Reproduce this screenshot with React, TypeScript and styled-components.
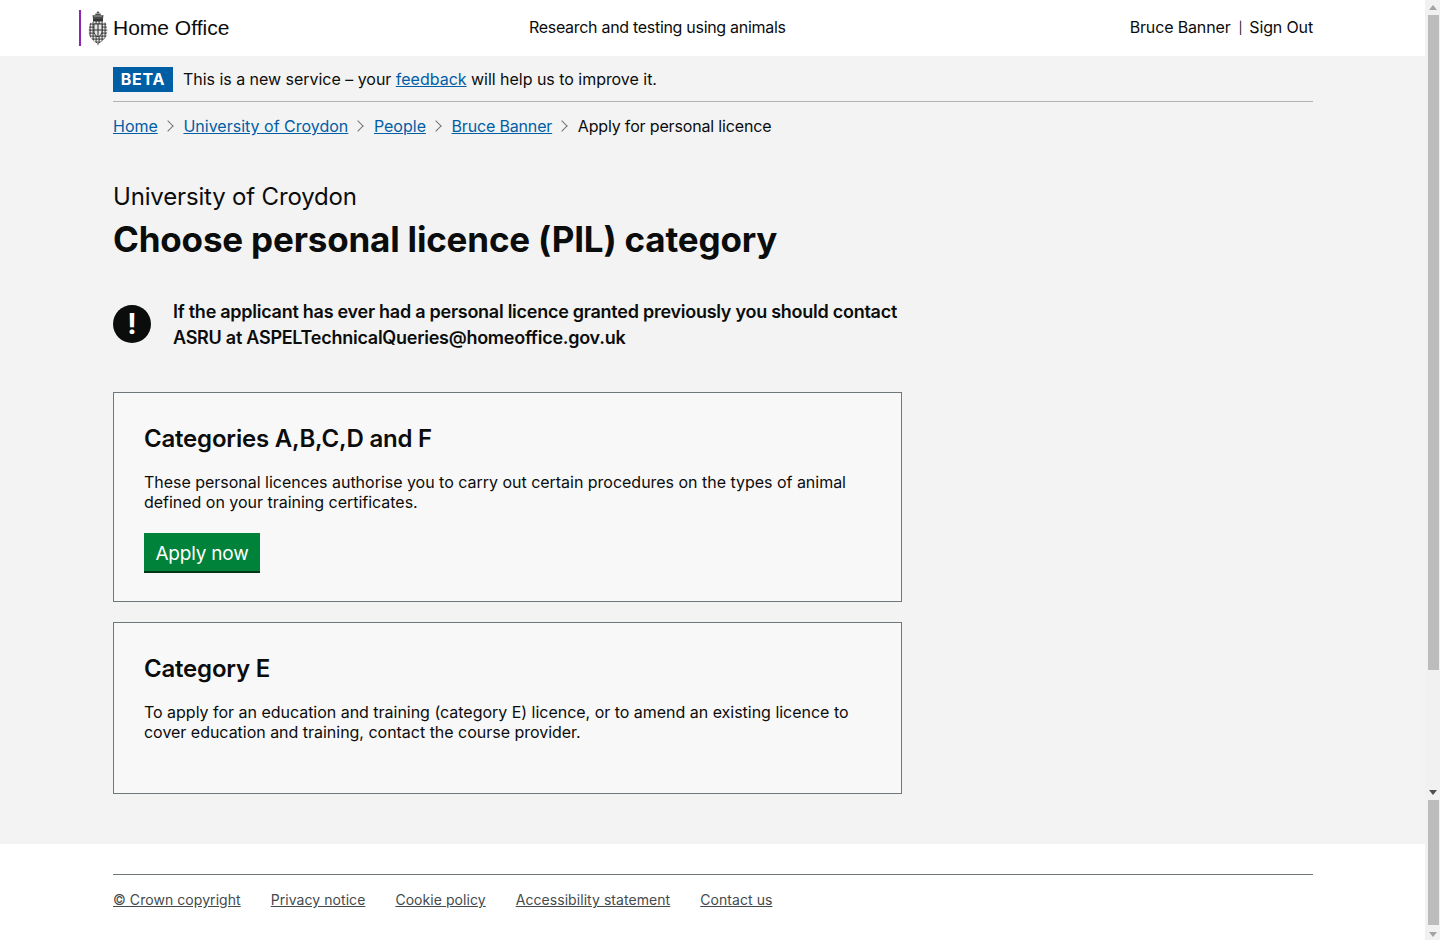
import React from "react"

import styled, { createGlobalStyle } from "styled-components"

const crumbs = [
  { label: "Home" },
  { label: "University of Croydon" },
  { label: "People" },
  { label: "Bruce Banner", tight: true },
]
const footerLinks = ["© Crown copyright", "Privacy notice", "Cookie policy", "Accessibility statement", "Contact us"]

const App = () => {
  return (
    <Viewport>
      <GlobalStyle />
      <Page>
        <Header>
          <Brand>
            <Crest />
            <BrandName>Home Office</BrandName>
          </Brand>
          <ServiceName>Research and testing using animals</ServiceName>
          <UserNav>
            <span>Bruce Banner</span>
            <NavDivider>|</NavDivider>
            <span>Sign Out</span>
          </UserNav>
        </Header>
        <Main>
          <Wrap>
            <PhaseBanner>
              <PhaseTag>BETA</PhaseTag>
              <span>
                This is a new service – your <Link href="#">feedback</Link> will help us to improve it.
              </span>
            </PhaseBanner>
            <Breadcrumbs>
              {crumbs.map(crumb => (
                <React.Fragment key={crumb.label}>
                  <Link href="#" $tight={crumb.tight}>
                    {crumb.label}
                  </Link>
                  <Chevron />
                </React.Fragment>
              ))}
              <CurrentCrumb>Apply for personal licence</CurrentCrumb>
            </Breadcrumbs>
            <Caption>University of Croydon</Caption>
            <Title>Choose personal licence (PIL) category</Title>
            <Warning>
              <WarningIcon>!</WarningIcon>
              <WarningText>
                If the applicant has ever had a personal licence granted previously you should contact ASRU at
                ASPELTechnicalQueries@homeoffice.gov.uk
              </WarningText>
            </Warning>
            <Panel>
              <PanelTitle>Categories A,B,C,D and F</PanelTitle>
              <PanelText>
                These personal licences authorise you to carry out certain procedures on the types of animal defined on
                your training certificates.
              </PanelText>
              <ApplyButton>Apply now</ApplyButton>
            </Panel>
            <Panel $short>
              <PanelTitle>Category E</PanelTitle>
              <PanelText>
                To apply for an education and training (category E) licence, or to amend an existing licence to cover
                education and training, contact the course provider.
              </PanelText>
            </Panel>
          </Wrap>
        </Main>
        <Footer>
          <FooterLinks>
            {footerLinks.map(link => (
              <FooterLink href="#" key={link}>
                {link}
              </FooterLink>
            ))}
          </FooterLinks>
        </Footer>
      </Page>
      <Scrollbar>
        <ArrowUp />
        <Thumb $height={655} />
        <ArrowDown $dark />
        <Thumb $height={125} />
        <ArrowDown />
      </Scrollbar>
    </Viewport>
  )
}

// royal crest, small enough that only crown + mottled shield read
const Crest = () => (
  <CrestSvg viewBox="0 0 20 36">
    <defs>
      <pattern id="mottle" width="3" height="3" patternUnits="userSpaceOnUse">
        <rect width="3" height="3" fill="#8a8a8a" />
        <rect x="0" y="0" width="1.2" height="1.2" fill="#eee" />
        <rect x="1.6" y="1.6" width="1.2" height="1.2" fill="#222" />
      </pattern>
    </defs>
    <path d="M5 9 L4.5 5 Q7 6 8 3.5 L10 1 L12 3.5 Q13 6 15.5 5 L15 9 Z" fill="#4a4a4a" />
    <path d="M6 6 H14 M7 3.5 H13" stroke="#bbb" strokeWidth="0.8" />
    <rect x="5" y="9" width="10" height="2.5" fill="#333" />
    <path d="M2 13 Q10 9 18 13 Q20 19 19 25 Q16 31 10 34 Q4 31 1 25 Q0 19 2 13 Z" fill="url(#mottle)" />
    <path d="M6 14 H14 V22 Q14 25 10 27 Q6 25 6 22 Z" fill="#e6e6e6" stroke="#333" strokeWidth="0.9" />
    <path d="M10 14 V27 M6 20 H14" stroke="#333" strokeWidth="1.1" />
    <path d="M9 33 H11 L10 36 Z" fill="#777" />
  </CrestSvg>
)

const GlobalStyle = createGlobalStyle`
  html, body {
    margin: 0;
    padding: 0;
    overflow: hidden;
  }

  body {
    background-color: #fff;
    color: #0b0c0c;
    font-family: Inter, "Liberation Sans", sans-serif;
    font-size: 16px;
  }

  * {
    box-sizing: border-box;
  }
`

const Viewport = styled.div`
  display: flex;
  width: 1440px;
  height: 940px;
  overflow: hidden;
`

const Page = styled.div`
  display: flex;
  flex-direction: column;
  width: 1425px;
  flex: none;
`

const Header = styled.header`
  display: grid;
  grid-template-columns: 450px 1fr auto;
  align-items: center;
  height: 56px;
  padding: 0 112px 0 79px;
  background-color: #fff;
`

const Brand = styled.div`
  display: flex;
  align-items: center;
  height: 36px;
  padding-left: 7px;
  border-left: 2px solid #8f23b3;
`

const CrestSvg = styled.svg`
  width: 20px;
  height: 36px;
  flex: none;
`

const BrandName = styled.span`
  margin-left: 5px;
  font-family: "Liberation Sans", Arial, sans-serif;
  font-size: 21px;
`

const ServiceName = styled.div`
  padding-bottom: 2px;
  font-size: 16px;
  letter-spacing: -0.3px;
`

const UserNav = styled.div`
  display: flex;
  align-items: center;
  justify-content: flex-end;
  padding-bottom: 2px;
  font-size: 16px;
  letter-spacing: -0.15px;
`

const NavDivider = styled.span`
  margin: 0 7px 0 8px;
  font-size: 12px;
`

const Main = styled.main`
  height: 788px;
  background-color: #f3f3f3;
`

const Wrap = styled.div`
  width: 1200px;
  margin-left: 113px;
`

const PhaseBanner = styled.div`
  display: flex;
  align-items: center;
  gap: 10px;
  height: 46px;
  padding-top: 1px;
  border-bottom: 1px solid #b1b4b6;
  letter-spacing: -0.03px;
  line-height: 24px;
`

const PhaseTag = styled.strong`
  display: block;
  width: 60px;
  height: 25px;
  background-color: #005ea5;
  color: #fff;
  font-weight: 700;
  line-height: 25px;
  text-align: center;
  letter-spacing: 0.8px;
`

const Link = styled.a<{ $tight?: boolean }>`
  color: #005ea5;
  letter-spacing: ${({ $tight }) => ($tight ? "-0.17px" : "0")};
  text-decoration: underline;
`

const Breadcrumbs = styled.nav`
  display: flex;
  align-items: center;
  height: 24px;
  margin-top: 12px;
`

const CurrentCrumb = styled.span`
  letter-spacing: -0.16px;
`

const Chevron = styled.span`
  width: 8px;
  height: 8px;
  margin: 0 11.6px 0 6px;
  border-top: 1px solid #6f777b;
  border-right: 1px solid #6f777b;
  transform: rotate(45deg);
`

const Caption = styled.div`
  margin-top: 44px;
  font-size: 24px;
  letter-spacing: -0.17px;
  line-height: 30px;
`

const Title = styled.h1`
  margin: 7px 0 0;
  font-size: 35px;
  font-weight: 700;
  letter-spacing: -0.18px;
  line-height: 40px;
`

const Warning = styled.div`
  display: flex;
  width: 800px;
  margin-top: 40px;
`

const WarningIcon = styled.div`
  width: 38px;
  height: 38px;
  margin-top: 6px;
  flex: none;
  border-radius: 50%;
  background-color: #0b0c0c;
  color: #fff;
  font-size: 28px;
  font-weight: 700;
  line-height: 38px;
  text-align: center;
`

const WarningText = styled.p`
  margin: 0 0 0 22px;
  font-size: 18px;
  font-weight: 600;
  letter-spacing: -0.26px;
  line-height: 26px;
`

const Panel = styled.section<{ $short?: boolean }>`
  width: 789px;
  height: ${({ $short }) => ($short ? "172px" : "210px")};
  margin-top: ${({ $short }) => ($short ? "20px" : "41px")};
  padding: 31px 30px 30px;
  border: 1px solid #6f777b;
  background-color: #f8f8f8;
`

const PanelTitle = styled.h2`
  margin: 0;
  font-size: 24px;
  font-weight: 600;
  letter-spacing: -0.2px;
  line-height: 29px;
`

const PanelText = styled.p`
  margin: 19px 0 0;
  font-size: 16px;
  letter-spacing: -0.02px;
  line-height: 20px;
`

const ApplyButton = styled.button`
  display: block;
  width: 116px;
  height: 40px;
  margin-top: 21px;
  padding: 2px 0 0;
  border: 0;
  border-bottom: 2px solid #003618;
  background-color: #00823b;
  color: #fff;
  font-family: inherit;
  font-size: 19px;
  letter-spacing: -0.2px;
`

const Footer = styled.footer`
  flex: 1;
  padding-top: 30px;
  background-color: #fff;
`

const FooterLinks = styled.div`
  display: flex;
  gap: 30px;
  width: 1200px;
  margin-left: 113px;
  padding-top: 16px;
  border-top: 1px solid #6f777b;
`

const FooterLink = styled.a`
  color: #454a4c;
  font-size: 14px;
  letter-spacing: 0.06px;
  line-height: 18px;
  text-decoration: underline;
`

const Scrollbar = styled.div`
  display: flex;
  flex-direction: column;
  align-items: center;
  width: 15px;
  height: 940px;
  background-color: #f1f1f1;
`

const ArrowUp = styled.div`
  width: 0;
  height: 0;
  margin: 5px 0 5px;
  border-left: 4px solid transparent;
  border-right: 4px solid transparent;
  border-bottom: 5px solid #a3a3a3;
`

const ArrowDown = styled.div<{ $dark?: boolean }>`
  width: 0;
  height: 0;
  margin: ${({ $dark }) => ($dark ? "120px 0 5px" : "7px 0 0")};
  border-left: 4px solid transparent;
  border-right: 4px solid transparent;
  border-top: 5px solid ${({ $dark }) => ($dark ? "#505050" : "#a3a3a3")};
`

const Thumb = styled.div<{ $height: number }>`
  width: 11px;
  height: ${({ $height }) => $height}px;
  margin-left: 1px;
  flex: none;
  background-color: #bcbcbc;
`

export default App
